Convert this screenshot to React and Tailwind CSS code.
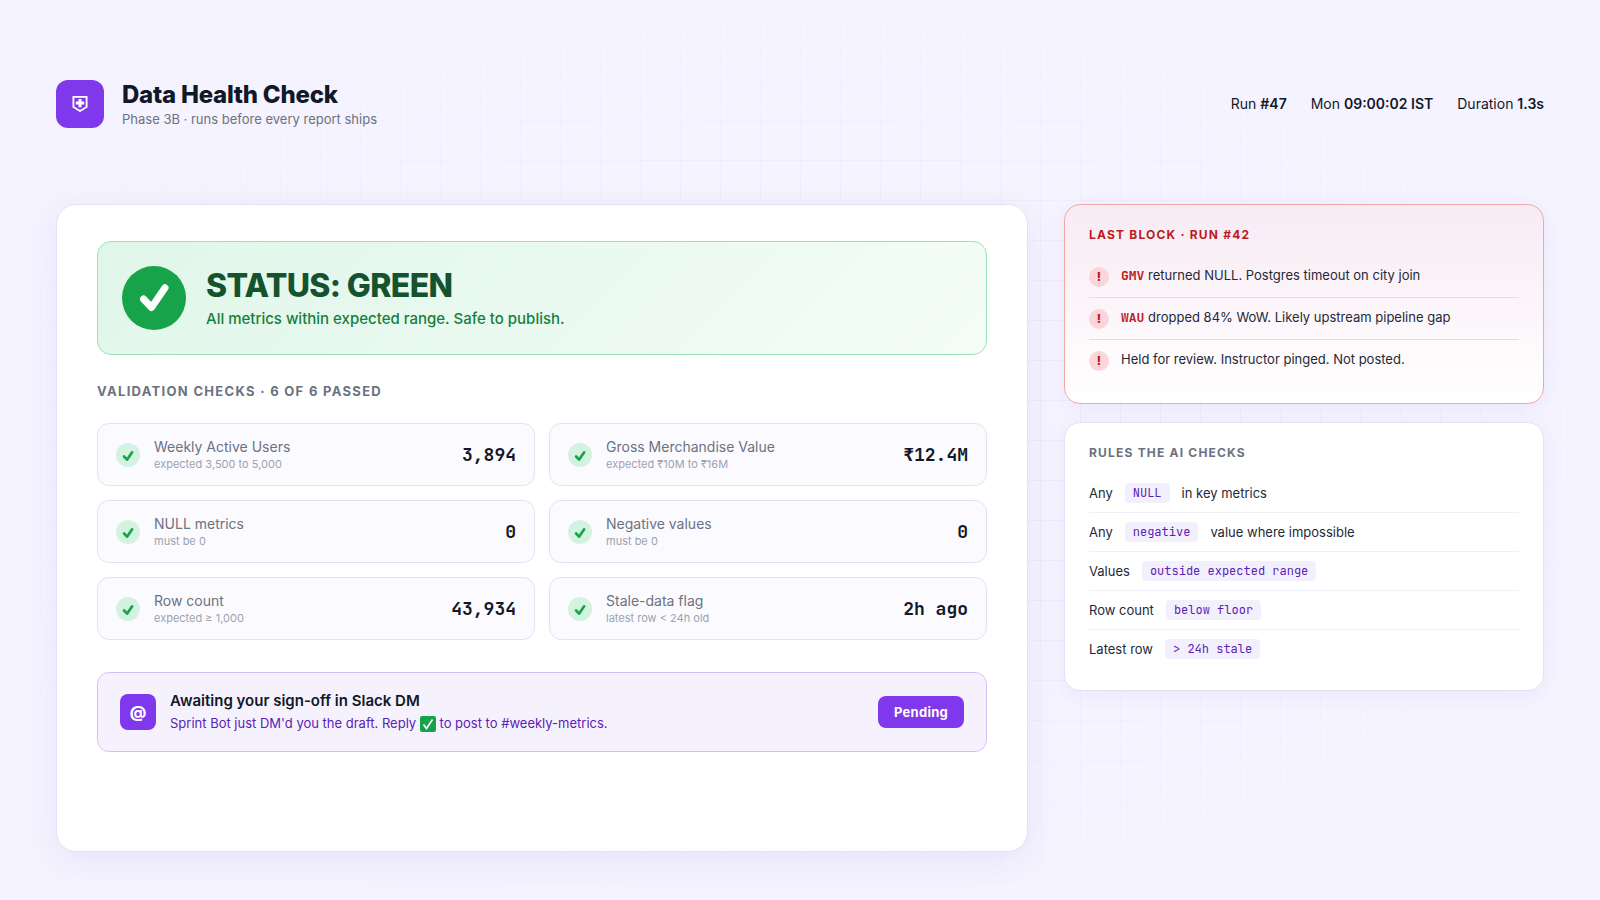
const meta = [
  { label: 'Run', value: '#47' },
  { label: 'Mon', value: '09:00:02 IST' },
  { label: 'Duration', value: '1.3s' }
]

const checks = [
  { name: 'Weekly Active Users', hint: 'expected 3,500 to 5,000', value: '3,894' },
  { name: 'Gross Merchandise Value', hint: 'expected ₹10M to ₹16M', value: '₹12.4M' },
  { name: 'NULL metrics', hint: 'must be 0', value: '0' },
  { name: 'Negative values', hint: 'must be 0', value: '0' },
  { name: 'Row count', hint: 'expected ≥ 1,000', value: '43,934' },
  { name: 'Stale-data flag', hint: 'latest row < 24h old', value: '2h ago' }
]

const issues = [
  { metric: 'GMV', text: 'returned NULL. Postgres timeout on city join' },
  { metric: 'WAU', text: 'dropped 84% WoW. Likely upstream pipeline gap' },
  { text: 'Held for review. Instructor pinged. Not posted.' }
]

const rules = [
  { before: 'Any', code: 'NULL', after: 'in key metrics' },
  { before: 'Any', code: 'negative', after: 'value where impossible' },
  { before: 'Values', code: 'outside expected range' },
  { before: 'Row count', code: 'below floor' },
  { before: 'Latest row', code: '> 24h stale' }
]

function CheckMark({ className, viewBox = '0 0 64 64' }) {
  return (
    <svg viewBox={viewBox} fill="none" stroke="currentColor" className={className} aria-hidden="true">
      <path d="M21.5 33 L29.5 41.5 L43 21.8" strokeWidth="7" strokeLinecap="round" strokeLinejoin="round" />
    </svg>
  )
}

function ShieldIcon() {
  return (
    <svg viewBox="0 0 16 16" className="w-4 h-4 text-white" aria-hidden="true">
      <path d="M1.4 0.9 H14.6 V11 L8 15 L1.4 11 Z" fill="none" stroke="currentColor" strokeWidth="1.8" />
      <path d="M6.5 3 H9.5 V5.5 H12.2 V8.5 H9.5 V11.2 H6.5 V8.5 H3.8 V5.5 H6.5 Z" fill="currentColor" />
    </svg>
  )
}

function CheckCard({ check }) {
  return (
    <div className="flex items-center gap-3.5 px-[18px] py-[13px] bg-[#fbfaff] border border-[#e5e1f0] rounded-xl">
      <div className="w-6 h-6 shrink-0 rounded-full bg-[#d3f3e0] text-[#16a34a]">
        <CheckMark className="w-6 h-6" viewBox="0 -3 64 64" />
      </div>
      <div className="flex-1">
        <div className="text-sm leading-5 text-[#6b7280]">{check.name}</div>
        <div className="text-[11px] leading-[15px] text-[#9ca3af]">{check.hint}</div>
      </div>
      <div className="font-['JetBrains_Mono','DejaVu_Sans_Mono',monospace] text-lg leading-6 font-bold">
        {check.value}
      </div>
    </div>
  )
}

export default function App() {
  return (
    <div className="relative min-h-screen flex flex-col px-14 pt-20 pb-12 bg-[#f5f3ff] font-['Inter',sans-serif] text-[#111827]">
      {/* Faded grid */}
      <div className="absolute inset-0 pointer-events-none bg-[linear-gradient(rgba(91,33,182,0.04)_1px,transparent_1px),linear-gradient(90deg,rgba(91,33,182,0.04)_1px,transparent_1px)] bg-size-[40px_40px] mask-[radial-gradient(ellipse_at_center,black_30%,transparent_80%)]" />

      {/* Header */}
      <header className="relative flex items-center justify-between h-12 mb-[76px]">
        <div className="flex items-center gap-[18px]">
          <div className="w-12 h-12 rounded-xl bg-[#8038ec] flex items-center justify-center">
            <ShieldIcon />
          </div>
          <div>
            <h1 className="text-2xl leading-[31px] font-extrabold tracking-[-0.01em]">Data Health Check</h1>
            <p className="text-[13px] leading-[19px] text-[#6b7280]">Phase 3B · runs before every report ships</p>
          </div>
        </div>
        <div className="flex gap-6 text-sm">
          {meta.map((m) => (
            <span key={m.label}>
              {m.label} <strong className="font-semibold">{m.value}</strong>
            </span>
          ))}
        </div>
      </header>

      <div className="relative flex-1 grid grid-cols-[1fr_480px] gap-9">
        {/* Status panel */}
        <main className="px-10 py-9 bg-white border border-[#e5e1f0] rounded-[20px] shadow-[0_8px_32px_rgba(91,33,182,0.08)]">
          <section className="flex items-center gap-5 p-6 border border-[#9be3b6] rounded-[14px] bg-[linear-gradient(135deg,#e0f6e9,#f4fdf7)]">
            <div className="w-16 h-16 shrink-0 rounded-full bg-[#16a34a] text-white">
              <CheckMark className="w-16 h-16" />
            </div>
            <div>
              <h2 className="text-[32px] leading-[38px] font-extrabold tracking-[-0.02em] text-[#14532d]">STATUS: GREEN</h2>
              <p className="mt-1 text-[15px] leading-5 font-medium text-[#15803d]">
                All metrics within expected range. Safe to publish.
              </p>
            </div>
          </section>

          <h3 className="mt-7 mb-6 text-[13px] leading-4 font-bold tracking-[0.1em] text-[#6b7280]">
            VALIDATION CHECKS · 6 OF 6 PASSED
          </h3>
          <div className="grid grid-cols-2 gap-3.5">
            {checks.map((c) => (
              <CheckCard key={c.name} check={c} />
            ))}
          </div>

          {/* Sign-off */}
          <section className="mt-8 flex items-center gap-3.5 px-[22px] py-[17px] bg-[#f5f2fe] border border-[#d3c1f6] rounded-xl">
            <div className="w-9 h-9 shrink-0 rounded-lg bg-[#8038ec] text-white text-base font-extrabold flex items-center justify-center">
              @
            </div>
            <div className="flex-1">
              <div className="text-[15px] leading-[22px] font-semibold">Awaiting your sign-off in Slack DM</div>
              <p className="text-[13px] leading-[22px] text-[#5b21b6]">
                Sprint Bot just DM'd you the draft. Reply{' '}
                <svg viewBox="0 0 16 16" className="inline w-4 h-4" role="img" aria-label="check mark">
                  <rect width="16" height="16" rx="2" fill="#16a34a" />
                  <path d="M3.5 8.5 L6.5 12.5 L12.5 3.5" fill="none" stroke="white" strokeWidth="1.6" />
                </svg>{' '}
                to post to #weekly-metrics.
              </p>
            </div>
            <button className="px-4 py-2 rounded-lg bg-[#8038ec] text-white text-[13px] leading-4 font-bold tracking-[0.02em]">
              Pending
            </button>
          </section>
        </main>

        <aside className="flex flex-col gap-[18px]">
          {/* Last block */}
          <section className="px-6 py-[22px] border border-[#f3a8a8] rounded-2xl bg-[linear-gradient(180deg,#f8ebf4,#ffffff)] shadow-[0_4px_20px_rgba(91,33,182,0.06)]">
            <h3 className="mb-3.5 text-xs leading-[15px] font-bold tracking-[0.1em] text-[#b91c1c]">LAST BLOCK · RUN #42</h3>
            <ul>
              {issues.map((issue) => (
                <li key={issue.text} className="flex items-start gap-3 py-2.5 border-b border-[#f9d5da] last:border-b-0">
                  <span className="mt-px w-5 h-5 shrink-0 rounded-full bg-[#fbd5d9] text-[#b91c1c] text-xs font-extrabold flex items-center justify-center">
                    !
                  </span>
                  <span className="text-[13px] leading-[19px] text-[#1f2937]">
                    {issue.metric && (
                      <strong className="font-['JetBrains_Mono','DejaVu_Sans_Mono',monospace] font-bold text-[#b91c1c]">
                        {issue.metric}
                      </strong>
                    )}{' '}
                    {issue.text}
                  </span>
                </li>
              ))}
            </ul>
          </section>

          {/* Rules */}
          <section className="px-6 py-[22px] bg-white border border-[#e5e1f0] rounded-2xl shadow-[0_4px_20px_rgba(91,33,182,0.06)]">
            <h3 className="mb-3.5 text-xs leading-[15px] font-bold tracking-[0.1em] text-[#6b7280]">RULES THE AI CHECKS</h3>
            <ul>
              {rules.map((rule) => (
                <li
                  key={rule.code}
                  className="flex items-center gap-3 py-[9px] border-b border-[#f1eff7] last:border-b-0 text-[13px] leading-5 text-[#1f2937]"
                >
                  <span>{rule.before}</span>
                  <code className="px-2 rounded bg-[#f3f0fe] font-['JetBrains_Mono','DejaVu_Sans_Mono',monospace] text-xs leading-5 text-[#5b21b6]">
                    {rule.code}
                  </code>
                  {rule.after && <span>{rule.after}</span>}
                </li>
              ))}
            </ul>
          </section>
        </aside>
      </div>
    </div>
  )
}
